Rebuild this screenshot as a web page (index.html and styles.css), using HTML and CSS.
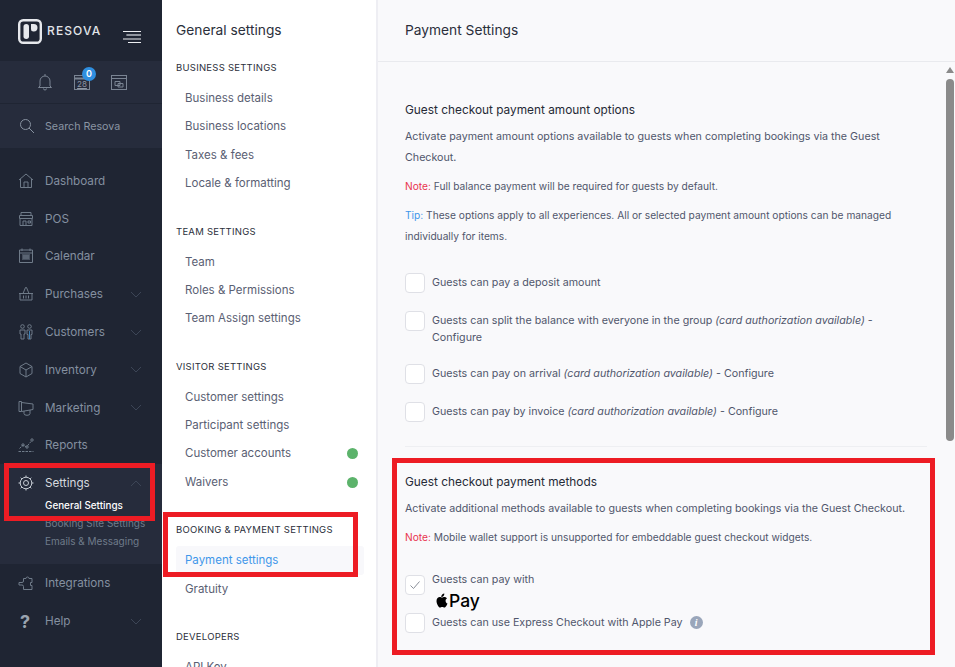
FILE: index.html
```html
<!DOCTYPE html>
<html lang="en">
<head>
<meta charset="utf-8">
<title>Payment Settings</title>
<link rel="stylesheet" href="styles.css">
</head>
<body>
<div class="app">
  <aside class="side">
    <div class="brand">
      <svg class="logo" width="24" height="25" viewBox="0 0 24 25"><rect x="1.200" y="1.200" width="21.600" height="22.600" rx="4" fill="#1f2533" stroke="#e6e8ec" stroke-width="2.400"/><rect x="5.500" y="5" width="5.500" height="15" rx="2.750" fill="#e6e8ec"/><path d="M13 5h2.800a3.700 3.700 0 0 1 0 7.400H15.500a2.500 2.500 0 0 1-2.500-2.500z" fill="#e6e8ec"/></svg>
      <span class="word">RESOVA</span>
      <svg class="burger" width="18" height="14" viewBox="0 0 18 14"><path d="M0 1.500H18M3.500 5H18" stroke="#eceef2" fill="none"/><path d="M3.500 5H18" stroke="#9aa0aa" fill="none"/><path d="M0 9H18" stroke="#eceef2" fill="none"/><path d="M5 12.500H18" stroke="#eceef2" fill="none"/></svg>
    </div>
    <div class="tools">
      <svg width="16" height="18" viewBox="0 0 16 18" fill="none" stroke="#7a8493"><path d="M3 13V8a5 5 0 0 1 10 0v5l1.500 1.500h-13zM8 1v2M6.500 15.500a1.500 1.500 0 0 0 3 0"/></svg>
      <span class="cal">
        <svg width="16" height="16" viewBox="0 0 16 16" fill="none" stroke="#7a8493"><rect x="0.500" y="1.500" width="15" height="14"/><path d="M0.500 4.500h15" stroke-width="2"/></svg>
        <span class="cal-num">28</span>
        <span class="badge">0</span>
      </span>
      <svg width="16" height="16" viewBox="0 0 16 16" fill="none" stroke="#7a8493"><rect x="0.500" y="1.500" width="15" height="14"/><path d="M0.500 4.500h15M4 7.500h5v4H4zM7 9.500h5v3.500H7z"/></svg>
    </div>
    <div class="search">
      <svg width="16" height="16" viewBox="0 0 16 16" fill="none" stroke="#8792a0"><circle cx="6.500" cy="6.500" r="5"/><path d="M10 10l5 5"/></svg>
      <span>Search Resova</span>
    </div>
    <nav class="nav">
      <a class="row"><svg class="ico" viewBox="0 0 16 16"><path d="M1 7l7-6 7 6M2.500 6v8.500h11V6M6 14.500V9h4v5.500"/></svg><span>Dashboard</span></a>
      <a class="row"><svg class="ico" viewBox="0 0 16 16"><path d="M3 1.500h10v3H3zM1.500 4.500h13v3h-13zM2 7.500v7h12v-7M5 14.500V10h3v4.500M10 10h2.500v2H10z"/></svg><span>POS</span></a>
      <a class="row"><svg class="ico" viewBox="0 0 16 16"><path d="M1.500 2h13v12.500h-13zM1.500 5h13M4 0.500V3M12 0.500V3M4 7h8M4 9h8M4 11h8M6 7v4M8 7v4M10 7v4"/></svg><span>Calendar</span></a>
      <a class="row"><svg class="ico" viewBox="0 0 16 16"><path d="M1 7.500h14M2 7.500v6.500h12V7.500M5 7.500L7.500 1.500h1L11 7.500M5.500 9.500v3M8 9.500v3M10.500 9.500v3"/></svg><span>Purchases</span><svg class="chev" viewBox="0 0 12 7"><path d="M1 1l5 5 5-5"/></svg></a>
      <a class="row"><svg class="ico" viewBox="0 0 16 16"><circle cx="4.500" cy="2.500" r="1.800"/><circle cx="11.500" cy="2.500" r="1.800"/><path d="M2 6h5v4H6v5H3v-5H2zM9 6h5v4.500h-1V15h-3v-4.500H9z"/><path d="M11.500 7v8" stroke="#3d80b5"/></svg><span>Customers</span><svg class="chev" viewBox="0 0 12 7"><path d="M1 1l5 5 5-5"/></svg></a>
      <a class="row"><svg class="ico" viewBox="0 0 16 16"><path d="M8 1l6 3.500v7L8 15l-6-3.500v-7zM2 4.500L8 8l6-3.500M8 8v7"/></svg><span>Inventory</span><svg class="chev" viewBox="0 0 12 7"><path d="M1 1l5 5 5-5"/></svg></a>
      <a class="row"><svg class="ico" viewBox="0 0 16 16"><path d="M1 1.500h2.500v10H1zM3.500 2.500L15 4v5.500l-11.500 2M6 11v2.500a2.500 1.500 0 0 0 6 0V10"/></svg><span>Marketing</span><svg class="chev" viewBox="0 0 12 7"><path d="M1 1l5 5 5-5"/></svg></a>
      <a class="row"><svg class="ico" viewBox="0 0 16 16"><path d="M0.500 14.500h15M1.500 11.500L5 8l3.500 2L13 4.500" stroke-dasharray="2.500 1"/><circle cx="14" cy="3" r="1.200"/><circle cx="5" cy="8" r="1.200"/><circle cx="9" cy="10" r="1.200"/></svg><span>Reports</span></a>
      <div class="group">
        <a class="row on"><svg class="ico" viewBox="0 0 16 16"><circle cx="8" cy="8" r="2.500"/><circle cx="8" cy="8" r="5.800"/><path d="M8 0.500v1.700M8 13.800v1.700M0.500 8h1.700M13.800 8h1.700M2.700 2.700l1.200 1.200M12.100 12.100l1.200 1.200M2.700 13.300l1.200-1.200M12.100 3.900l1.200-1.200"/></svg><span>Settings</span><svg class="chev" viewBox="0 0 12 7"><path d="M1 6l5-5 5 5"/></svg></a>
        <a class="sub now">General Settings</a>
        <a class="sub">Booking Site Settings</a>
        <a class="sub">Emails &amp; Messaging</a>
      </div>
      <a class="row"><svg class="ico" viewBox="0 0 16 16"><path d="M5.500 3.500h2.500a1.500 1.500 0 1 1 3 0h3v4h-1.500v3H14v4H5.500v-3a1.500 1.500 0 0 0-1.500-1.500H1V7.500h3a1.500 1.500 0 0 0 1.500-1.500z"/></svg><span>Integrations</span></a>
      <a class="row"><span class="q">?</span><span>Help</span><svg class="chev" viewBox="0 0 12 7"><path d="M1 1l5 5 5-5"/></svg></a>
    </nav>
  </aside>

  <section class="menu">
    <h2 class="menu-title">General settings</h2>
    <h3 class="cap">BUSINESS SETTINGS</h3>
    <ul class="list">
      <li>Business details</li><li>Business locations</li><li>Taxes &amp; fees</li><li>Locale &amp; formatting</li>
    </ul>
    <h3 class="cap">TEAM SETTINGS</h3>
    <ul class="list">
      <li>Team</li><li>Roles &amp; Permissions</li><li>Team Assign settings</li>
    </ul>
    <h3 class="cap">VISITOR SETTINGS</h3>
    <ul class="list">
      <li>Customer settings</li><li>Participant settings</li><li>Customer accounts<i class="dot"></i></li><li>Waivers<i class="dot"></i></li>
    </ul>
    <h3 class="cap">BOOKING &amp; PAYMENT SETTINGS</h3>
    <ul class="list">
      <li class="active">Payment settings</li><li>Gratuity</li>
    </ul>
    <h3 class="cap">DEVELOPERS</h3>
    <ul class="list">
      <li>API Key</li>
    </ul>
    <div class="mark mark-menu"></div>
  </section>

  <main class="main">
    <header class="top">Payment Settings</header>
    <div class="body">
      <div class="scroll">
        <i class="up"></i>
        <i class="thumb"></i>
      </div>
      <section class="block first">
        <h4>Guest checkout payment amount options</h4>
        <p class="lead">Activate payment amount options available to guests when completing bookings via the Guest Checkout.</p>
        <p class="small"><b class="note">Note:</b> Full balance payment will be required for guests by default.</p>
        <p class="small"><b class="tip">Tip:</b> These options apply to all experiences. All or selected payment amount options can be managed individually for items.</p>
        <div class="opts">
          <label class="opt"><i class="box"></i><span>Guests can pay a deposit amount</span></label>
          <label class="opt"><i class="box"></i><span>Guests can split the balance with everyone in the group <em>(card authorization available)</em> - Configure</span></label>
          <label class="opt"><i class="box"></i><span>Guests can pay on arrival <em>(card authorization available)</em> - Configure</span></label>
          <label class="opt"><i class="box"></i><span>Guests can pay by invoice <em>(card authorization available)</em> - Configure</span></label>
        </div>
      </section>
      <section class="block second">
        <h4>Guest checkout payment methods</h4>
        <p class="lead">Activate additional methods available to guests when completing bookings via the Guest Checkout.</p>
        <p class="small"><b class="note">Note:</b> Mobile wallet support is unsupported for embeddable guest checkout widgets.</p>
        <label class="opt apple"><i class="box"><svg width="12" height="12" viewBox="0 0 12 12"><path d="M1.500 6.500l3 3 6-7" fill="none" stroke="#8a8f99"/></svg></i>
          <span>Guests can pay with
            <span class="apay"><svg width="12" height="15" viewBox="0 0 12 15"><path d="M8.300 0.500c.1 1.100-.3 1.900-.8 2.500-.6.700-1.400 1.100-2.200 1-.1-1 .4-1.900.9-2.500.5-.6 1.400-1 2.100-1zM11 5.300c-1.200.8-1.400 1.800-1.400 2.700 0 1.200.7 2.100 1.900 2.600-.3.900-.7 1.700-1.200 2.400-.6.800-1.100 1.500-1.900 1.500-.8 0-1.100-.5-2.200-.5-1 0-1.400.5-2.200.5-.8 0-1.400-.8-1.900-1.600C1.200 11.500.5 9.700.5 8c0-2.600 1.700-4 3.300-4 .9 0 1.600.6 2.200.6.600 0 1.400-.6 2.400-.6.700 0 1.800.3 2.600 1.300z" fill="#000"/></svg><span>Pay</span></span>
          </span>
        </label>
        <label class="opt express"><i class="box"></i><span>Guests can use Express Checkout with Apple Pay</span><i class="info">i</i></label>
      </section>
      <hr class="rule low">
    </div>
    <div class="mark mark-main"></div>
  </main>
  <div class="mark mark-side"></div>
</div>
</body>
</html>
```
FILE: styles.css
```css
* { box-sizing: border-box; }
html, body { margin: 0; height: 100%; overflow: hidden; }
body { font-family: "Inter", "Liberation Sans", sans-serif; color: #50566b; }
h2, h3, h4, p, ul { margin: 0; padding: 0; font-weight: 400; }
.app { position: relative; display: flex; width: 955px; height: 667px; overflow: hidden; }

.side { width: 162px; flex: none; background: #1f2533; display: flex; flex-direction: column; }
.brand { height: 61px; display: flex; align-items: flex-start; padding: 19px 21px 0 18px; }
.word { color: #e2e4e9; font-size: 12px; font-weight: 500; letter-spacing: 1.100px; margin: 4px 0 0 5px; }
.burger { margin: 11px 0 0 auto; flex: none; }
.logo { flex: none; }
.tools { height: 43px; background: #262c3c; border-bottom: 1px solid #1f2533; display: flex; align-items: center; gap: 21px; padding: 0 0 0 37px; }
.cal { position: relative; display: block; width: 16px; height: 16px; }
.cal svg { display: block; }
.cal-num { position: absolute; left: 0; right: 0; top: 6px; font-size: 8px; line-height: 9px; text-align: center; color: #8d97a5; text-decoration: underline; }
.badge { position: absolute; left: 8px; top: -7px; width: 14px; height: 14px; border-radius: 50%; background: #2f8fe0; color: #fff; font-size: 9px; line-height: 14px; text-align: center; font-weight: 600; }
.search { height: 44px; background: #262c3c; display: flex; align-items: center; gap: 10px; padding: 0 0 0 19px; color: #8a95a3; font-size: 10.700px; }
.nav { padding-top: 14px; display: flex; flex-direction: column; }
.row { height: 37.800px; display: flex; align-items: center; padding: 0 18px; color: #8490a0; font-size: 11.700px; position: relative; flex: none; }
.ico { width: 16px; height: 16px; flex: none; margin-right: 11px; fill: none; stroke: #6f7b89; stroke-width: 1; }
.chev { width: 12px; height: 7px; margin-left: auto; margin-right: 2px; fill: none; stroke: #3c4556; stroke-width: 1; }
.q { width: 16px; margin-right: 11px; font-size: 18px; font-weight: 700; color: #9aa4b0; text-align: left; padding-left: 2px; }
.group { background: #262c3c; height: 100px; flex: none; }
.row.on { color: #d5d9df; }
.row.on .ico { stroke: #c6ccd4; }
.sub { display: block; height: 18px; line-height: 18px; padding-left: 45px; font-size: 10px; color: #6f7b8a; }
.sub.now { color: #fff; font-weight: 500; font-size: 9.900px; margin-top: -6px; }

.menu { width: 216px; flex: none; background: #fff; border-right: 2px solid #eeeef3; padding: 22px 0 0 14px; position: relative; }
.menu-title { font-size: 13.750px; line-height: 17px; color: #2b2f3b; margin-bottom: 23px; }
.cap { font-size: 9.500px; line-height: 12px; color: #2b2f3b; letter-spacing: 0.250px; margin-bottom: 10px; }
.list { list-style: none; margin-bottom: 28.400px; }
.list li { height: 28.300px; line-height: 28.300px; padding-left: 9px; font-size: 11.500px; color: #5a6073; position: relative; margin-right: 12px; }
.list .active { color: #3f97ea; background: #f8f8fb; border-radius: 3px; }
.dot { position: absolute; right: 6px; top: 9px; width: 11px; height: 11px; border-radius: 50%; background: #5cb36b; }

.main { flex: 1; background: #f9f9fb; display: flex; flex-direction: column; min-width: 0; position: relative; }
.top { height: 62px; flex: none; border-bottom: 1px solid #e9eaee; padding: 21px 0 0 27px; font-size: 13.750px; line-height: 18px; color: #2b2f3b; }
.body { flex: 1; padding: 0 28px 0 27px; position: relative; overflow: hidden; }
.scroll { position: absolute; right: 0; top: 0; bottom: 0; width: 10px; }
.up { position: absolute; left: 1px; top: 5px; width: 0; height: 0; border-left: 4px solid transparent; border-right: 4px solid transparent; border-bottom: 6px solid #8a8a8a; }
.thumb { position: absolute; left: 1px; top: 17px; width: 8px; height: 362px; border-radius: 4px; background: #8a8a8a; }
.first { padding-top: 39px; padding-bottom: 6px; border-bottom: 1px solid #eeeff2; }
.second { padding-top: 26px; }
h4 { font-size: 11.850px; line-height: 18px; color: #262a36; margin-bottom: 7px; }
.lead { font-size: 10.700px; line-height: 21px; margin-bottom: 8px; width: 510px; }
.small { font-size: 10.200px; line-height: 21px; margin-bottom: 8px; width: 510px; }
.note, .tip { font-weight: 400; }
.note { color: #e8344e; }
.tip { color: #3f97ea; }
.opts { margin-top: 26px; display: flex; flex-direction: column; }
.opt { display: flex; align-items: flex-start; font-size: 10.700px; line-height: 16.500px; margin-bottom: 18px; }
.box { flex: none; width: 20px; height: 20px; margin-right: 7px; background: #fff; border: 1px solid #dfe0e6; border-radius: 4px; display: flex; align-items: center; justify-content: center; }
.opt > span { padding-top: 2px; max-width: 450px; }
em { font-style: italic; }
.apple { margin-top: 23px; margin-bottom: 0; }
.apple .box { margin-top: 4px; }
.apple > span { padding-top: 1px; }
.apay { display: flex; align-items: center; gap: 1px; color: #000; font-size: 17.500px; font-weight: 500; line-height: 22px; height: 22px; margin: 1px 0 1px 4px; }
.express { margin-bottom: 0; }
.info { width: 13px; height: 13px; border-radius: 50%; background: #9aa6ba; color: #fff; font-size: 10px; line-height: 13px; text-align: center; margin: 3px 0 0 7px; font-family: "Liberation Serif", serif; font-weight: 700; }
.rule { border: 0; border-top: 1px dotted #e4e5ea; margin: 20px 0 0; }

.mark { position: absolute; border: 5px solid #ed1c24; pointer-events: none; }
.mark-side { left: 4px; top: 463px; width: 151px; height: 58px; }
.mark-menu { left: 1px; top: 512px; width: 195px; height: 65px; }
.mark-main { left: 14px; top: 458px; width: 543px; height: 197px; }
```
